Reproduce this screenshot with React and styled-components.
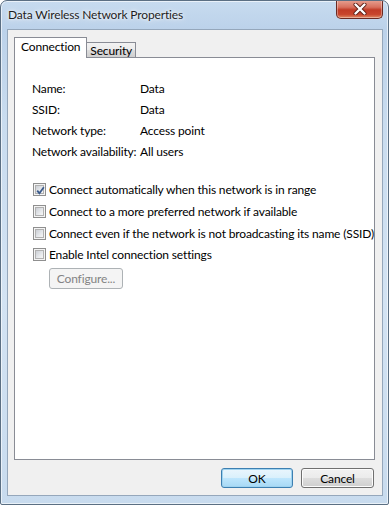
import React from "react";
import styled, { createGlobalStyle } from "styled-components";

const Global = createGlobalStyle`
  html, body { margin: 0; padding: 0; background: #ffffff; }
  body { font-family: "Lato", "Liberation Sans", sans-serif; font-size: 12px; color: #000; letter-spacing: -0.15px; }
  * { box-sizing: border-box; }
`;

const Window = styled.div`
  width: 389px;
  height: 505px;
  border: 1px solid #5b6f83;
  border-radius: 7px 7px 2px 2px;
  background: linear-gradient(180deg, #c7dbef 0px, #bcd2ea 28px, #c9dcef 120px, #d3e3f3 300px, #c8dbee 505px);
  display: flex;
  flex-direction: column;
  overflow: hidden;
  box-shadow: inset 0 0 0 1px rgba(255,255,255,0.6);
`;

const TitleBar = styled.div`
  height: 28px;
  display: flex;
  align-items: flex-start;
  justify-content: space-between;
  padding-left: 7px;
  padding-right: 5px;
`;

const Title = styled.div`
  font-size: 12px;
  line-height: 12px;
  margin-top: 8px;
  color: #1e1e1e;
  text-shadow: 0 0 6px rgba(255,255,255,0.9), 0 0 3px rgba(255,255,255,0.9);
`;

const CloseButton = styled.div`
  width: 47px;
  height: 19px;
  margin-top: -1px;
  border: 1px solid #6b2a22;
  border-top: none;
  border-radius: 0 0 5px 5px;
  background: linear-gradient(180deg, #e8a393 0%, #d8705d 40%, #c13b26 55%, #c8452c 80%, #e08a64 100%);
  box-shadow: inset 0 0 0 1px rgba(255,255,255,0.35);
  display: flex;
  align-items: center;
  justify-content: center;
`;

const Client = styled.div`
  margin: 0 5px 0 6px;
  height: 467px;
  background: #f0f0f0;
  border: 1px solid #95a7bb;
  display: flex;
  flex-direction: column;
  padding: 7px 7px 0 6px;
`;

const TabStrip = styled.div`
  display: flex;
  align-items: flex-end;
  height: 21px;
  position: relative;
  z-index: 1;
  margin-bottom: -1px;
`;

const Tab = styled.div`
  height: ${(p) => (p.$active ? "21px" : "16px")};
  padding: 0 ${(p) => (p.$active ? "6px" : "3px")};
  border: 1px solid #898c95;
  border-bottom: ${(p) => (p.$active ? "none" : "1px solid #898c95")};
  margin-left: ${(p) => (p.$active ? "0" : "-1px")};
  background: ${(p) => (p.$active ? "#ffffff" : "linear-gradient(180deg, #f2f2f2 0%, #ebebeb 50%, #dddddd 51%, #cfcfcf 100%)")};
  display: flex;
  align-items: center;
  padding-top: ${(p) => (p.$active ? "0" : "1px")};
  padding-bottom: ${(p) => (p.$active ? "3px" : "0")};
  z-index: ${(p) => (p.$active ? 2 : 1)};
`;

const Panel = styled.div`
  height: 403px;
  background: #ffffff;
  border: 1px solid #898c95;
  padding: 20px 0 0 17px;
  display: flex;
  flex-direction: column;
  white-space: nowrap;
`;

const InfoGrid = styled.div`
  display: grid;
  grid-template-columns: 108px auto;
  grid-auto-rows: 21px;
  align-items: center;
`;

const Options = styled.div`
  margin-top: 17px;
  display: flex;
  flex-direction: column;
`;

const CheckRow = styled.div`
  height: 21.7px;
  display: flex;
  align-items: center;
  gap: 3px;
  padding-left: 1px;
`;

const Box = styled.div`
  width: 13px;
  height: 13px;
  border: 1px solid #8f8f8f;
  background: #f4f4f4;
  padding: 1px;
  display: flex;
`;

const BoxInner = styled.div`
  flex: 1;
  border: 1px solid #b1b1b1;
  background: linear-gradient(135deg, #cbcfd5 0%, #e7e9ec 60%, #f6f6f6 100%);
  position: relative;
`;

const ButtonBase = styled.div`
  width: ${(p) => p.$w || 73}px;
  height: 21px;
  border-radius: 3px;
  display: flex;
  align-items: center;
  justify-content: center;
  font-size: 12px;
`;

const ConfigureButton = styled(ButtonBase)`
  margin: 2px 0 0 17px;
  border: 1px solid #adb2b5;
  background: #f4f4f4;
  color: #838383;
`;

const Footer = styled.div`
  display: flex;
  justify-content: flex-end;
  gap: 8px;
  padding-top: 8px;
  padding-right: 1px;
`;

const DialogButton = styled(ButtonBase)`
  height: 20px;
  border: 1px solid ${(p) => (p.$default ? "#3c7fb1" : "#707070")};
  background: ${(p) =>
    p.$default
      ? "linear-gradient(180deg, #eaf6fd 0%, #d9f0fc 50%, #bee6fd 51%, #a7d9f5 100%)"
      : "linear-gradient(180deg, #f2f2f2 0%, #ebebeb 50%, #dddddd 51%, #cfcfcf 100%)"};
  box-shadow: inset 0 0 0 1px ${(p) => (p.$default ? "#9fd3f0" : "#fcfcfc")};
`;

const Check = () => (
  <svg width="9" height="9" viewBox="0 0 9 9" style={{ position: "absolute", left: 0, top: 0 }}>
    <path d="M1.2 4.6 L3.4 7.2 L7.8 1.2" fill="none" stroke="#3b5b8c" strokeWidth="1.8" />
  </svg>
);

const Checkbox = ({ checked, label }) => (
  <CheckRow>
    <Box>
      <BoxInner>{checked && <Check />}</BoxInner>
    </Box>
    <span>{label}</span>
  </CheckRow>
);

export default function App() {
  return (
    <>
      <Global />
      <Window>
        <TitleBar>
          <Title>Data Wireless Network Properties</Title>
          <CloseButton>
            <svg width="14" height="12" viewBox="0 0 14 12">
              <path d="M2.5 1.5 L11.5 10.5 M11.5 1.5 L2.5 10.5" stroke="#5a1d14" strokeWidth="4" strokeLinecap="round" />
              <path d="M2.5 1.5 L11.5 10.5 M11.5 1.5 L2.5 10.5" stroke="#ffffff" strokeWidth="2.4" strokeLinecap="round" />
            </svg>
          </CloseButton>
        </TitleBar>
        <Client>
          <TabStrip>
            <Tab $active>Connection</Tab>
            <Tab>Security</Tab>
          </TabStrip>
          <Panel>
            <InfoGrid>
              <span>Name:</span><span>Data</span>
              <span>SSID:</span><span>Data</span>
              <span>Network type:</span><span>Access point</span>
              <span>Network availability:</span><span>All users</span>
            </InfoGrid>
            <Options>
              <Checkbox checked label="Connect automatically when this network is in range" />
              <Checkbox label="Connect to a more preferred network if available" />
              <Checkbox label="Connect even if the network is not broadcasting its name (SSID)" />
              <Checkbox label="Enable Intel connection settings" />
            </Options>
            <ConfigureButton $w={74}>Configure...</ConfigureButton>
          </Panel>
          <Footer>
            <DialogButton $default $w={72}>OK</DialogButton>
            <DialogButton $w={73}>Cancel</DialogButton>
          </Footer>
        </Client>
      </Window>
    </>
  );
}
